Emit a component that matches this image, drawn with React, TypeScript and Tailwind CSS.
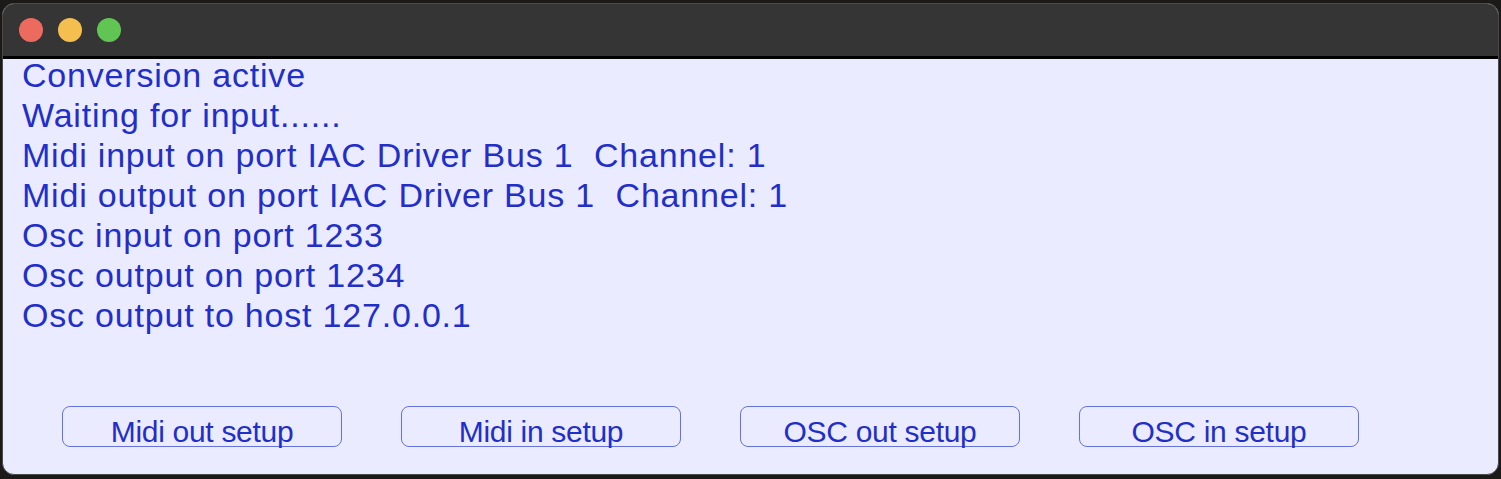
import React from "react";

const lines = [
  "Conversion active",
  "Waiting for input......",
  "Midi input on port IAC Driver Bus 1  Channel: 1",
  "Midi output on port IAC Driver Bus 1  Channel: 1",
  "Osc input on port 1233",
  "Osc output on port 1234",
  "Osc output to host 127.0.0.1",
];

const buttons = ["Midi out setup", "Midi in setup", "OSC out setup", "OSC in setup"];

export default function App() {
  return (
    <div className="w-[1501px] h-[479px] bg-[#1c1a18] p-[2px] pt-[3px] pb-[4px] overflow-hidden">
      <div className="w-full h-full rounded-[12px] overflow-hidden flex flex-col bg-[#ebebff] border border-[#4a4a4a]">
        <div className="h-[55px] bg-[#353535] border-b-[3px] border-black flex items-center gap-[15px] pl-[16px] shrink-0">
          <div className="w-[24px] h-[24px] rounded-full bg-[#ec6a5e]" />
          <div className="w-[24px] h-[24px] rounded-full bg-[#f4bf4f]" />
          <div className="w-[24px] h-[24px] rounded-full bg-[#61c554]" />
        </div>
        <div
          className="pl-[19px] text-[34px] leading-[40px] tracking-[0.8px] text-[#1f2fc8] whitespace-pre -mt-[4px]"
          style={{ fontFamily: '"Liberation Sans", Arial, sans-serif' }}
        >
          {lines.map((l) => (
            <div key={l}>{l}</div>
          ))}
        </div>
        <div className="flex gap-[59px] pl-[59px] mt-[71px]">
          {buttons.map((b) => (
            <div
              key={b}
              className="w-[280px] h-[41px] rounded-[8px] border border-[#6472e2] flex items-center justify-center pt-[9px] text-[30px] tracking-[-0.3px] text-[#1f2fc8]"
              style={{ fontFamily: '"Liberation Sans", Arial, sans-serif' }}
            >
              {b}
            </div>
          ))}
        </div>
      </div>
    </div>
  );
}
